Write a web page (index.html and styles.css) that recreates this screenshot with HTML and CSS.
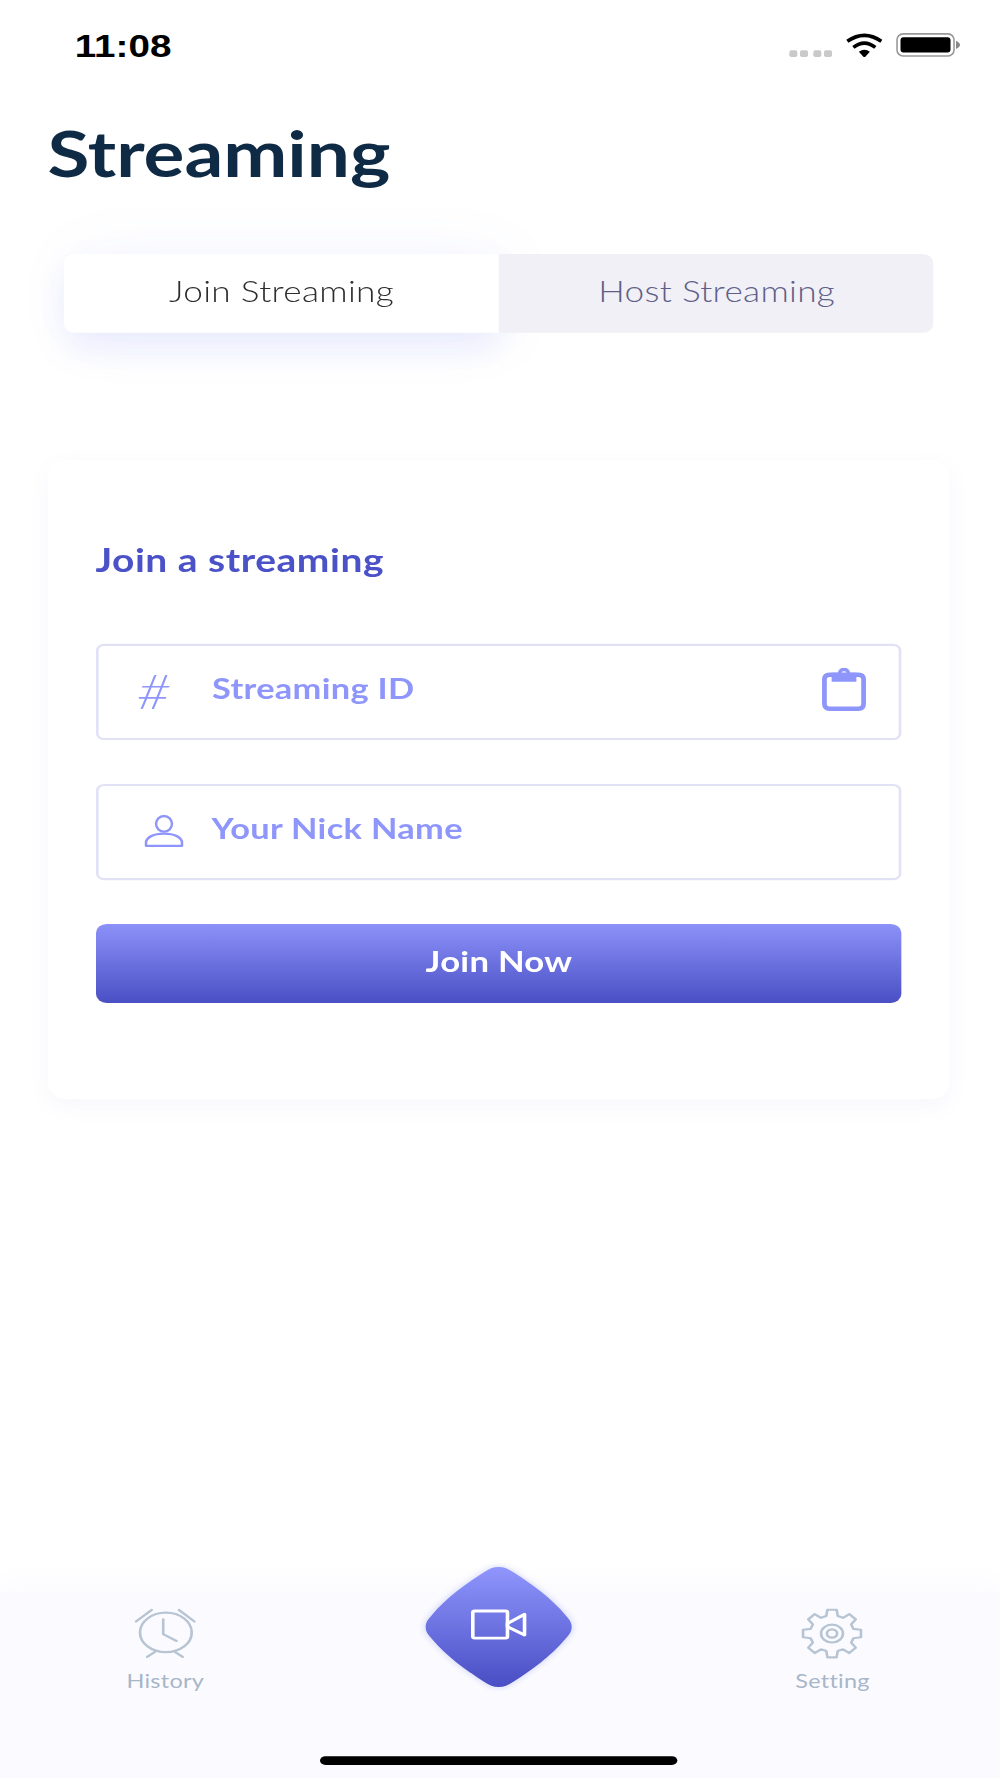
FILE: index.html
```html
<!DOCTYPE html>
<html lang="en">
<head>
<meta charset="utf-8">
<title>Streaming</title>
<link rel="stylesheet" href="styles.css">
</head>
<body>
<div class="screen">
  <header class="status">
    <span class="time">11:08</span>
    <div class="status-icons">
      <div class="signal"><i></i><i></i><i></i><i></i></div>
      <svg class="wifi" viewBox="0 0 38 25" preserveAspectRatio="none"><path d="M2 8.5Q19-3.5 36 8.5M8 14.5Q19 6 30 14.5" fill="none" stroke="#000" stroke-width="3.6"/><path d="M13.5 19Q19 15 24.500 19L19 25Z"/></svg>
      <svg class="battery" viewBox="0 0 64 24" preserveAspectRatio="none"><rect x="1" y="1" width="57" height="22" rx="6" fill="#fff" stroke="#999" stroke-width="1.6"/><rect x="4.500" y="4.500" width="50" height="15" rx="3"/><path d="M60 8Q64 10 64 12T60 16Z" fill="#888"/></svg>
    </div>
  </header>

  <h1 class="title">Streaming</h1>

  <div class="tabs">
    <div class="tab tab-active"><span class="tab-text">Join Streaming</span></div>
    <div class="tab tab-idle"><span class="tab-text">Host Streaming</span></div>
  </div>

  <section class="card">
    <h2 class="card-title">Join a streaming</h2>
    <div class="field">
      <span class="field-icon hash">#</span>
      <span class="field-text">Streaming ID</span>
      <svg class="clipboard" viewBox="0 0 44 44" preserveAspectRatio="none"><path d="M8 7H36Q41 7 41 12V36Q41 41 36 41H8Q3 41 3 36V12Q3 7 8 7Z" fill="none" stroke="#8f96fb" stroke-width="4.600"/><path fill-rule="evenodd" d="M10 5H16Q17 0 22 0T28 5H34V14H10ZM22 3.500A2.500 2.500 0 1 0 22 8.500A2.500 2.500 0 1 0 22 3.500Z" fill="#8f96fb"/></svg>
    </div>
    <div class="field">
      <span class="field-icon field-icon-person">
        <svg class="person" viewBox="0 0 40 34" preserveAspectRatio="none"><ellipse cx="20" cy="9.500" rx="8" ry="8" fill="none" stroke="#8f96fb" stroke-width="2.400"/><path d="M2 32V29C2 23 10 19.500 20 19.500S38 23 38 29V32Z" fill="none" stroke="#8f96fb" stroke-width="2.500" stroke-linejoin="round"/></svg>
      </span>
      <span class="field-text">Your Nick Name</span>
    </div>
    <div class="join-button"><span class="join-text">Join Now</span></div>
  </section>

  <nav class="tabbar">
    <div class="nav-item">
      <svg class="nav-icon" viewBox="0 0 24 24"><ellipse cx="12.200" cy="11.500" rx="9.700" ry="9"/><path d="M11.200 5.500V12.300L16.200 15.400M1 6.500L6.900 1.200M22.900 6.500L17.100 1.200M5.200 22.700L8.100 20.400M18.500 22.700L15.600 20.400"/></svg>
      <span class="nav-label">History</span>
    </div>
    <div class="nav-item">
      <svg class="nav-icon" viewBox="-12 -12 24 24"><polygon points="8.02,-2.15 10.86,-1.72 10.86,1.72 8.02,2.15 7.19,4.15 8.9,6.46 6.46,8.9 4.15,7.19 2.15,8.02 1.72,10.86 -1.72,10.86 -2.15,8.02 -4.15,7.19 -6.46,8.9 -8.9,6.46 -7.19,4.15 -8.02,2.15 -10.86,1.72 -10.86,-1.72 -8.02,-2.15 -7.19,-4.15 -8.9,-6.46 -6.46,-8.9 -4.15,-7.19 -2.15,-8.02 -1.72,-10.86 1.72,-10.86 2.15,-8.02 4.15,-7.19 6.46,-8.9 8.9,-6.46 7.19,-4.15"/><circle r="4.100"/><circle r="1.900"/></svg>
      <span class="nav-label">Setting</span>
    </div>
    <div class="fab">
      <svg class="fab-shape" viewBox="0 0 56 56">
        <defs><linearGradient id="fabGradient" x1="0" y1="0" x2="0" y2="1"><stop offset="0" stop-color="#9096fd"/><stop offset="1" stop-color="#484ec3"/></linearGradient></defs>
        <path fill="url(#fabGradient)" d="M28 .6C30 .6 31.500 1.400 33.500 3C40 8 48 15 53 22.500C54.600 24.600 55.400 26 55.400 28C55.400 30 54.600 31.400 53 33.500C48 41 40 48 33.500 53C31.500 54.600 30 55.400 28 55.400C26 55.400 24.500 54.600 22.500 53C16 48 8 41 3 33.500C1.400 31.400 .6 30 .6 28C.6 26 1.400 24.600 3 22.500C8 15 16 8 22.500 3C24.500 1.400 26 .6 28 .6Z"/>
        <g fill="none" stroke="#fff" stroke-width="1.350" stroke-linejoin="round"><rect x="18.300" y="20.700" width="13" height="12.400" rx=".7"/><path d="M31.300 26.400L37.700 22.200V31.700L31.300 27.900Z"/></g>
      </svg>
    </div>
    <div class="home-indicator"></div>
  </nav>
</div>
</body>
</html>
```

FILE: styles.css
```css
* { box-sizing: border-box; }
html, body { margin: 0; padding: 0; background: #fff; overflow: hidden; }
body { width: 1000px; height: 1778px; }

/* The whole phone layout is a 375x812 design stretched to the window */
.screen {
  width: 375px;
  height: 812px;
  display: flex;
  flex-direction: column;
  transform: scale(2.6667, 2.1897);
  transform-origin: 0 0;
  font-family: Lato, "Liberation Sans", sans-serif;
  background: #fff;
  position: relative;
}

.status {
  height: 44px;
  flex: none;
  display: flex;
  justify-content: space-between;
  padding: 14px 15.500px 0 28px;
}
.time {
  font-family: "Liberation Sans", sans-serif;
  font-weight: 700;
  font-size: 14.500px;
  line-height: 15px;
  color: #000;
}
.status-icons { display: flex; align-items: flex-start; padding-top: 1px; }
.signal { display: flex; gap: 1.500px; margin-top: 8px; margin-right: 4.700px; }
.signal i { display: block; width: 3px; height: 3.400px; border-radius: .8px; background: #c9c9c9; }
.wifi { width: 14.250px; height: 11.400px; margin-right: 4.400px; }
.battery { width: 24px; height: 11px; }

.title {
  margin: 6.200px 0 0 17.800px;
  height: 40px;
  font-size: 28.700px;
  line-height: 40px;
  font-weight: 700;
  color: #0f2a44;
  flex: none;
}

.tabs {
  margin: 25.800px 24.700px 0 24px;
  height: 36px;
  flex: none;
  display: flex;
}
.tab {
  flex: 1;
  display: flex;
  align-items: center;
  justify-content: center;
  font-size: 13.200px;
  font-weight: 300;
  letter-spacing: .12px;
}
.tab-text { margin-bottom: 1px; }
.tab-idle {
  position: relative;
  background: #f0f0f6;
  border-radius: 0 4px 4px 0;
  color: #5f5f87;
}
.tab-active {
  background: #fff;
  color: #2d2d2d;
  border-radius: 4px 0 0 4px;
  box-shadow: 0 7px 14px rgba(110, 120, 235, .12), 3px 1px 28px rgba(110, 120, 235, .06);
}

.card {
  margin: 58px 19px 0 18px;
  height: 292.300px;
  flex: none;
  padding: 36.200px 17.600px 0 17.800px;
  border-radius: 7px;
  background: #fff;
  box-shadow: 0 3px 9px rgba(120, 120, 220, .06);
}
.card-title {
  margin: 0 0 27.500px;
  font-size: 14.600px;
  line-height: 20px;
  font-weight: 700;
  letter-spacing: .2px;
  color: #4b52c8;
}
.field {
  height: 44px;
  margin-bottom: 20px;
  padding: 0 12px 0 15px;
  display: flex;
  align-items: center;
  border: 1px solid #e2e2f6;
  border-radius: 3px;
  color: #8f96fb;
}
.field-icon { width: 27.500px; flex: none; display: flex; }
.hash {
  width: 28.200px;
  font-size: 22px;
  line-height: 20px;
  font-weight: 300;
  font-style: italic;
  margin-left: -.5px;
}
.field-icon-person { padding-left: 2.700px; }
.person { width: 15px; height: 15.200px; flex: none; margin-top: -.5px; display: block; }
.field-text {
  flex: 1;
  font-size: 12.900px;
  font-weight: 700;
  letter-spacing: .12px;
  margin-bottom: 2.500px;
}
.clipboard { width: 17px; height: 20px; flex: none; margin-bottom: 1px; }
.join-button {
  height: 36.200px;
  display: flex;
  align-items: center;
  justify-content: center;
  border-radius: 4px;
  background: linear-gradient(#8c91f9, #4a50c4);
  color: #fff;
  font-size: 13px;
  font-weight: 700;
  letter-spacing: .1px;
}
.join-text { margin-bottom: 2px; }

.tabbar {
  margin-top: auto;
  height: 85.500px;
  flex: none;
  position: relative;
  display: flex;
  justify-content: space-between;
  padding: 7px 32.800px 0 32px;
  background: #fbfbff;
  box-shadow: 0 -5px 9px rgba(120, 120, 240, .03);
}
.nav-item { width: 60px; display: flex; flex-direction: column; align-items: center; }
.nav-icon {
  width: 24px;
  height: 24px;
  display: block;
  fill: none;
  stroke: #b7c4d3;
  stroke-width: 1;
  stroke-linecap: round;
  stroke-linejoin: round;
}
.nav-label {
  margin-top: 3px;
  font-size: 8.800px;
  line-height: 14px;
  letter-spacing: .1px;
  color: #a7b6c9;
}
.fab {
  position: absolute;
  left: 159.100px;
  top: -11.400px;
  width: 56px;
  height: 56px;
}
.fab-shape { width: 56px; height: 56px; display: block; filter: drop-shadow(0 .8px 1.500px rgba(90, 100, 230, .3)); }
.home-indicator {
  position: absolute;
  left: 120px;
  bottom: 6px;
  width: 134px;
  height: 4.500px;
  border-radius: 3px;
  background: #000;
}
```
